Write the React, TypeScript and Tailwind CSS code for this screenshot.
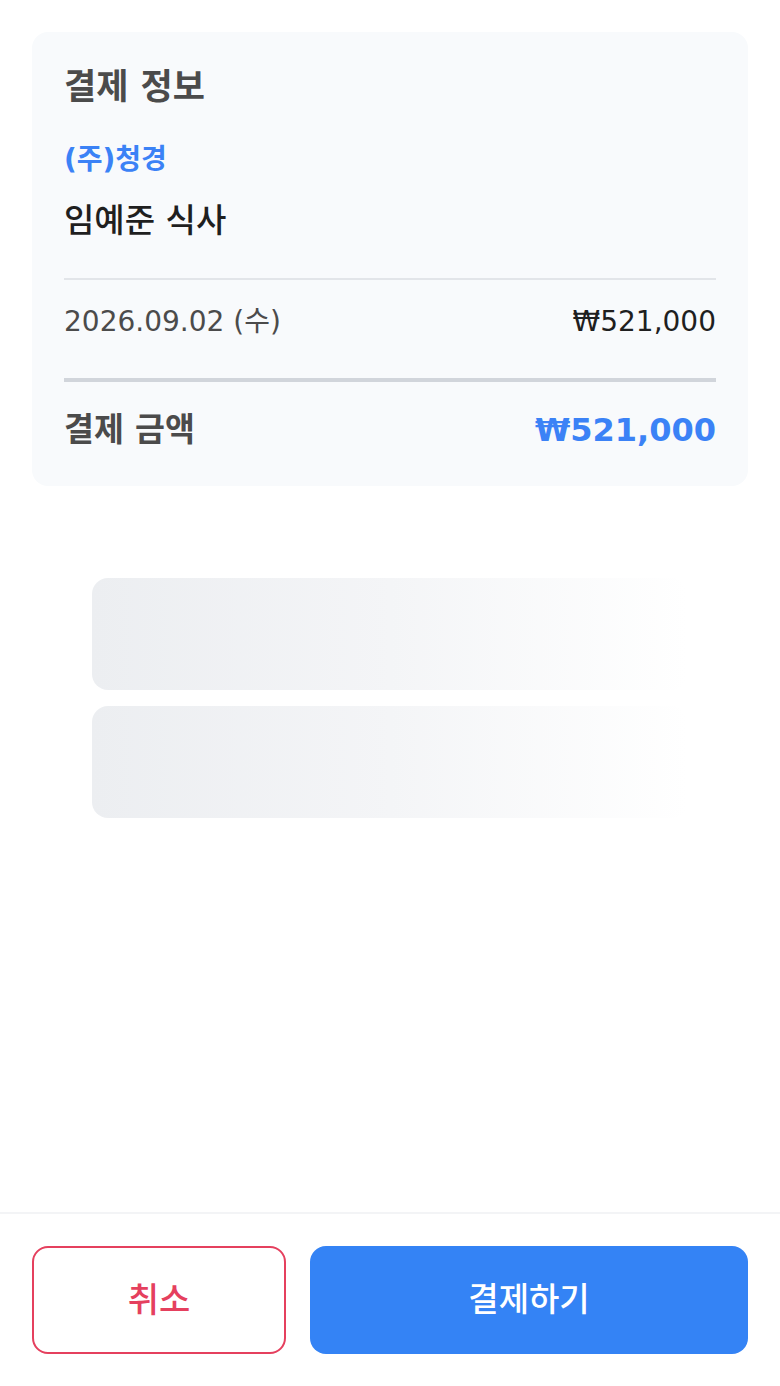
import React from "react";

export default function App() {
  const font = { fontFamily: '"DejaVu Sans", "Noto Sans CJK KR", sans-serif' };
  return (
    <div style={font} className="min-h-[1386px] w-[780px] bg-white flex flex-col">
      <main className="flex-1 px-8 pt-8">
        <section className="rounded-[16px] bg-[#f8fafc] px-8 pt-8 pb-[34px]">
          <h2 className="text-[35px] leading-[46px] font-bold text-[#4b4b4b]">결제 정보</h2>
          <p className="mt-[32px] text-[28px] leading-[36px] font-bold text-[#3b82f6]">(주)청경</p>
          <p className="mt-[22px] text-[33px] leading-[42px] font-medium text-[#1f1f1f]">임예준 식사</p>
          <div className="mt-[36px] h-[2px] bg-[#e2e5e9]" />
          <div className="mt-[22px] mb-[36px] flex items-center justify-between text-[28px] leading-[40px]">
            <span className="text-[#4b4b4b]">2026.09.02 (수)</span>
            <span className="text-[#1f1f1f]">₩521,000</span>
          </div>
          <div className="h-[4px] bg-[#d1d5db]" />
          <div className="mt-[26px] flex items-center justify-between">
            <span className="text-[32.5px] leading-[44px] font-semibold text-[#4b4b4b]">결제 금액</span>
            <span className="text-[32px] leading-[44px] font-bold text-[#3b82f6]">₩521,000</span>
          </div>
        </section>
        <div className="mt-[92px] mx-[60px] flex flex-col gap-4">
          <div className="h-[112px] rounded-[16px] bg-gradient-to-r from-[#eceef1] via-[#f4f5f7] to-white" />
          <div className="h-[112px] rounded-[16px] bg-gradient-to-r from-[#eceef1] via-[#f4f5f7] to-white" />
        </div>
      </main>
      <footer className="border-t-2 border-[#f3f4f6] px-8 py-8 flex gap-6">
        <button className="w-[254px] h-[108px] rounded-[16px] border-2 border-[#e5405e] bg-white text-[34px] font-medium text-[#e5405e]">
          취소
        </button>
        <button className="flex-1 h-[108px] rounded-[16px] bg-[#3483f5] text-[33px] font-medium text-white">
          결제하기
        </button>
      </footer>
    </div>
  );
}
